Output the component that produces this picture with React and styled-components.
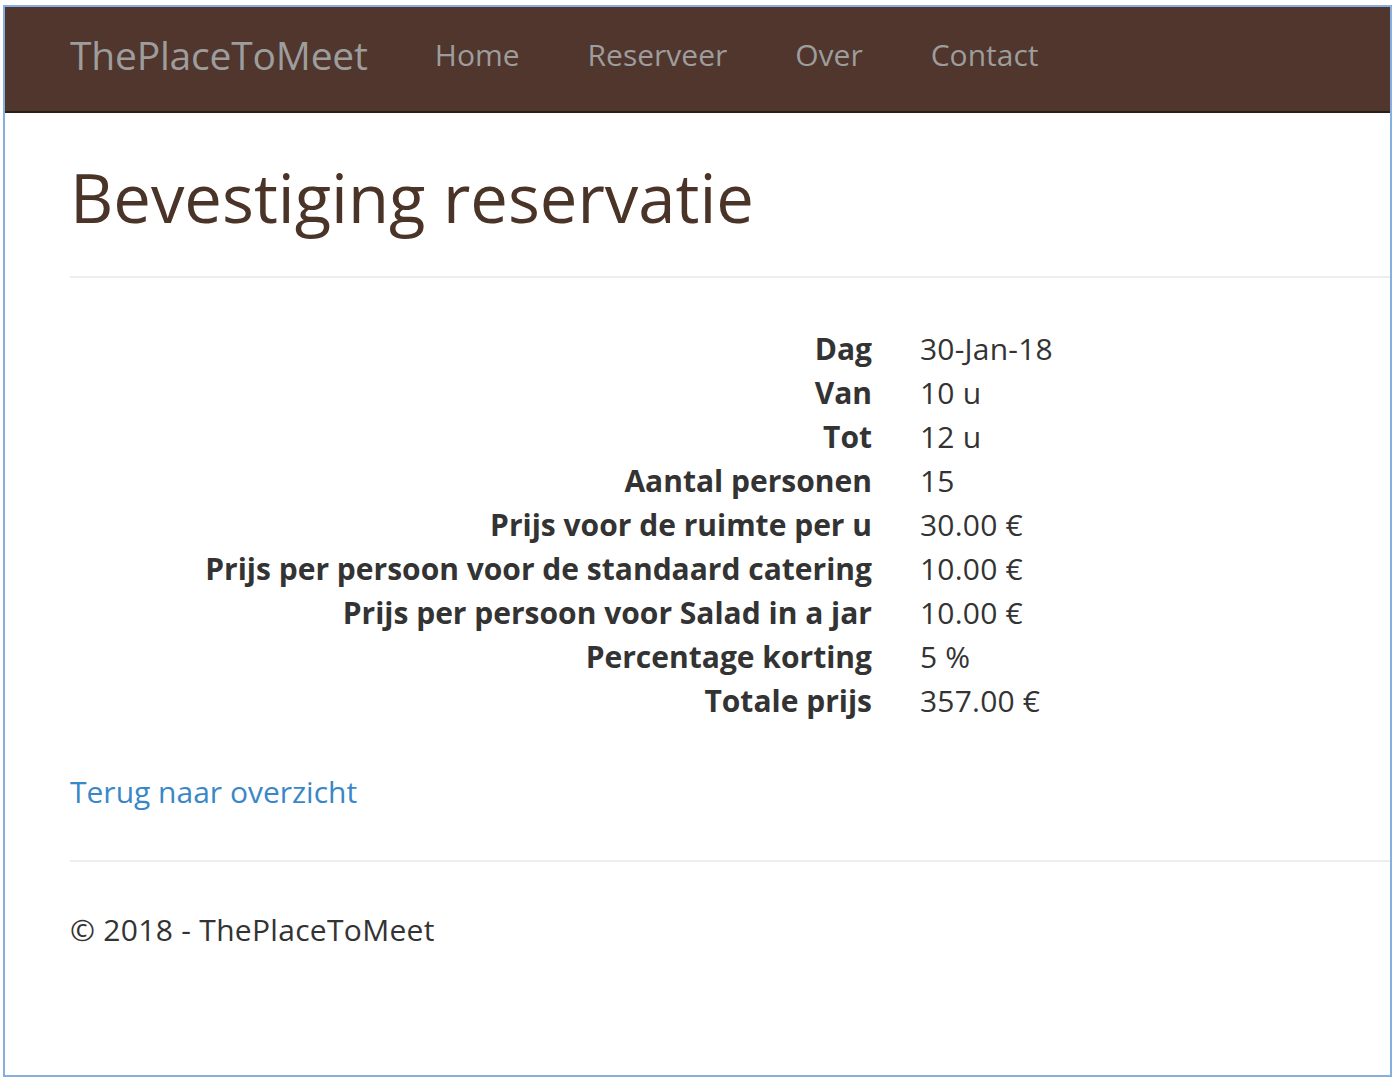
import React from 'react'
import styled, { createGlobalStyle } from 'styled-components'

const GlobalStyle = createGlobalStyle`
    html, body {
        margin: 0;
        padding: 0;
        background: #ffffff;
    }
    body {
        font-family: "Open Sans", "Noto Sans", sans-serif;
        color: #333333;
    }
`

const details = [
    ['Dag', '30-Jan-18'],
    ['Van', '10 u'],
    ['Tot', '12 u'],
    ['Aantal personen', '15'],
    ['Prijs voor de ruimte per u', '30.00 €'],
    ['Prijs per persoon voor de standaard catering', '10.00 €'],
    ['Prijs per persoon voor Salad in a jar', '10.00 €'],
    ['Percentage korting', '5 %'],
    ['Totale prijs', '357.00 €'],
]

function App() {
    return (
        <>
            <GlobalStyle />
            <Frame>
                <Navbar>
                    <Brand href="#">ThePlaceToMeet</Brand>
                    <NavList>
                        <NavLink href="#">Home</NavLink>
                        <NavLink href="#">Reserveer</NavLink>
                        <NavLink href="#">Over</NavLink>
                        <NavLink href="#">Contact</NavLink>
                    </NavList>
                </Navbar>
                <Body>
                    <Title>Bevestiging reservatie</Title>
                    <Rule />
                    <Details>
                        {details.map(([label, value]) => (
                            <React.Fragment key={label}>
                                <Term>{label}</Term>
                                <Value>{value}</Value>
                            </React.Fragment>
                        ))}
                    </Details>
                    <BackLink href="#">Terug naar overzicht</BackLink>
                    <Rule $gap="46px" />
                    <Footer>© 2018 - ThePlaceToMeet</Footer>
                </Body>
            </Frame>
        </>
    )
}

export default App

const Frame = styled.div`
    box-sizing: border-box;
    margin: 5px 4px 0 3px;
    height: 1072px;
    border: 2px solid #86aee0;
    overflow: hidden;
`

const Navbar = styled.nav`
    display: flex;
    align-items: center;
    gap: 67px;
    height: 104px;
    padding-left: 65px;
    background: #50362d;
    border-bottom: 2px solid #2a1e19;
`

const Brand = styled.a`
    font-size: 39px;
    color: #9d9d9d;
    text-decoration: none;
    letter-spacing: -0.2px;
    margin-top: -9px;
`

const NavList = styled.div`
    display: flex;
    gap: 68px;
    margin-top: -9px;
`

const NavLink = styled.a`
    font-size: 30px;
    color: #9d9d9d;
    text-decoration: none;
`

const Body = styled.main`
    padding: 46px 0 0 65px;
`

const Title = styled.h2`
    margin: 0;
    font-size: 67px;
    line-height: 76px;
    font-weight: 500;
    color: #4a3327;
`

const Rule = styled.hr`
    margin: ${p => p.$gap || '41px'} 0 0 0;
    border: 0;
    border-top: 2px solid #eeeeee;
`

const Details = styled.dl`
    display: grid;
    grid-template-columns: 802px 1fr;
    column-gap: 48px;
    margin: 49px 0 0 0;
    font-size: 30px;
    line-height: 44px;
`

const Term = styled.dt`
    text-align: right;
    font-weight: 700;
    color: #333333;
`

const Value = styled.dd`
    margin: 0;
    color: #333333;
    letter-spacing: 0.2px;
`

const BackLink = styled.a`
    display: block;
    margin-top: 47px;
    font-size: 30px;
    line-height: 44px;
    color: #3a87c8;
    text-decoration: none;
`

const Footer = styled.footer`
    margin-top: 46px;
    font-size: 30px;
    line-height: 44px;
    color: #333333;
    letter-spacing: 0.3px;
`
